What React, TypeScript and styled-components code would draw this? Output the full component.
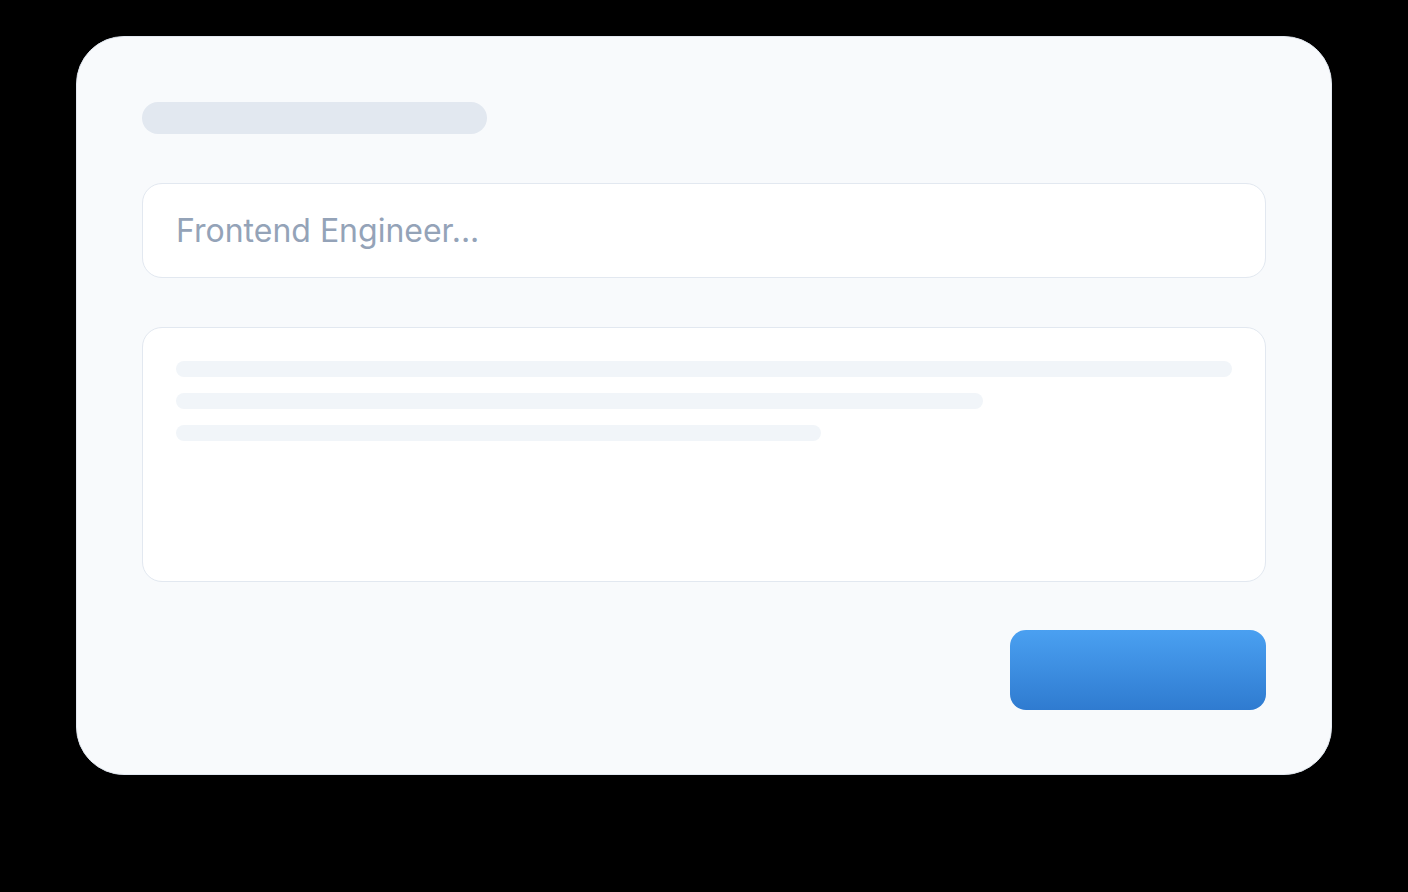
import styled, { createGlobalStyle } from 'styled-components';

const GlobalStyle = createGlobalStyle`
  html, body {
    margin: 0;
    padding: 0;
    background: #000;
    font-family: Inter, "Noto Sans", sans-serif;
  }
`;

const Page = styled.div`
  padding: 36px 76px;
`;

const Card = styled.div`
  box-sizing: border-box;
  width: 1256px;
  padding: 65px 65px 64px;
  background: #f8fafc;
  border: 1px solid #e2e8f0;
  border-radius: 48px;
  display: flex;
  flex-direction: column;
`;

const TitleBar = styled.div`
  width: 345px;
  height: 32px;
  border-radius: 16px;
  background: #e2e8f0;
`;

const Input = styled.div`
  box-sizing: border-box;
  margin-top: 49px;
  height: 95px;
  padding: 0 33px;
  display: flex;
  align-items: center;
  background: #fff;
  border: 1.5px solid #e2e8f0;
  border-radius: 20px;
  color: #94a3b8;
  font-size: 32px;
`;

const TextArea = styled.div`
  box-sizing: border-box;
  margin-top: 49px;
  height: 255px;
  padding: 33px;
  display: flex;
  flex-direction: column;
  gap: 16px;
  background: #fff;
  border: 1.5px solid #e2e8f0;
  border-radius: 20px;
`;

const Line = styled.div<{ $width: string }>`
  width: ${p => p.$width};
  height: 16px;
  border-radius: 8px;
  background: #f1f5f9;
`;

const Footer = styled.div`
  margin-top: 48px;
  display: flex;
  justify-content: flex-end;
`;

const Button = styled.button`
  width: 256px;
  height: 80px;
  border: none;
  border-radius: 16px;
  background: linear-gradient(180deg, #4aa0f1 0%, #2f7bd0 100%);
  cursor: pointer;
`;

export default function App() {
  return (
    <>
      <GlobalStyle />
      <Page>
        <Card>
          <TitleBar />
          <Input>Frontend Engineer...</Input>
          <TextArea>
            <Line $width="100%" />
            <Line $width="76.4%" />
            <Line $width="61.1%" />
          </TextArea>
          <Footer>
            <Button />
          </Footer>
        </Card>
      </Page>
    </>
  );
}
